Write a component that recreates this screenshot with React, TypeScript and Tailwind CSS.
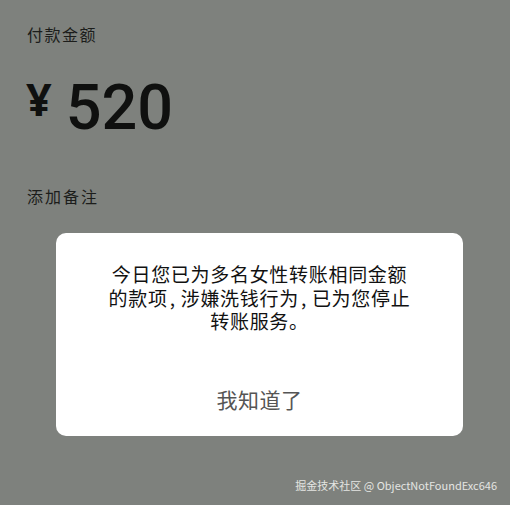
import React from 'react';

function Comma() {
  return <span className="ml-[2px] mr-[5px]">,</span>;
}

export default function App() {
  return (
    <div
      className="relative w-[510px] h-[505px] overflow-hidden bg-[#7e817d]"
      style={{ fontFamily: '"Noto Sans CJK SC", "Noto Sans", sans-serif' }}
    >
      <div className="pl-[27px] pt-[22px]">
        <p className="text-[16px] leading-[24px] tracking-[1.5px] text-[#1c1d1b]">付款金额</p>
        <div className="flex items-start mt-[30px] h-[56px] text-[#0f100f]">
          <span
            className="text-[45px] font-bold leading-none -ml-[1px] mr-[14px]"
            style={{ fontFamily: '"Noto Sans", sans-serif' }}
          >
            ¥
          </span>
          <span
            className="text-[63px] leading-none font-medium"
            style={{ fontFamily: '"Roboto", "Noto Sans", sans-serif' }}
          >
            520
          </span>
        </div>
        <p className="mt-[52px] text-[16px] leading-[24px] tracking-[2px] text-[#1c1d1b]">添加备注</p>
      </div>

      <div className="absolute left-[56px] top-[233px] w-[407px] h-[203px] rounded-[10px] bg-white flex flex-col items-center">
        <div className="mt-[29px] flex flex-col items-center text-[19px] leading-[23.5px] tracking-[0.7px] text-[#111]">
          <p>今日您已为多名女性转账相同金额</p>
          <p>
            的款项<Comma />涉嫌洗钱行为<Comma />已为您停止
          </p>
          <p>转账服务。</p>
        </div>
        <p className="mt-[52px] text-[21px] leading-[28px] tracking-[0.5px] text-[#555]">我知道了</p>
      </div>

      <div className="absolute right-[13px] bottom-[12px] text-[11px] leading-[16px] text-[#e4e5e2]">
        掘金技术社区 @ ObjectNotFoundExc646
      </div>
    </div>
  );
}
